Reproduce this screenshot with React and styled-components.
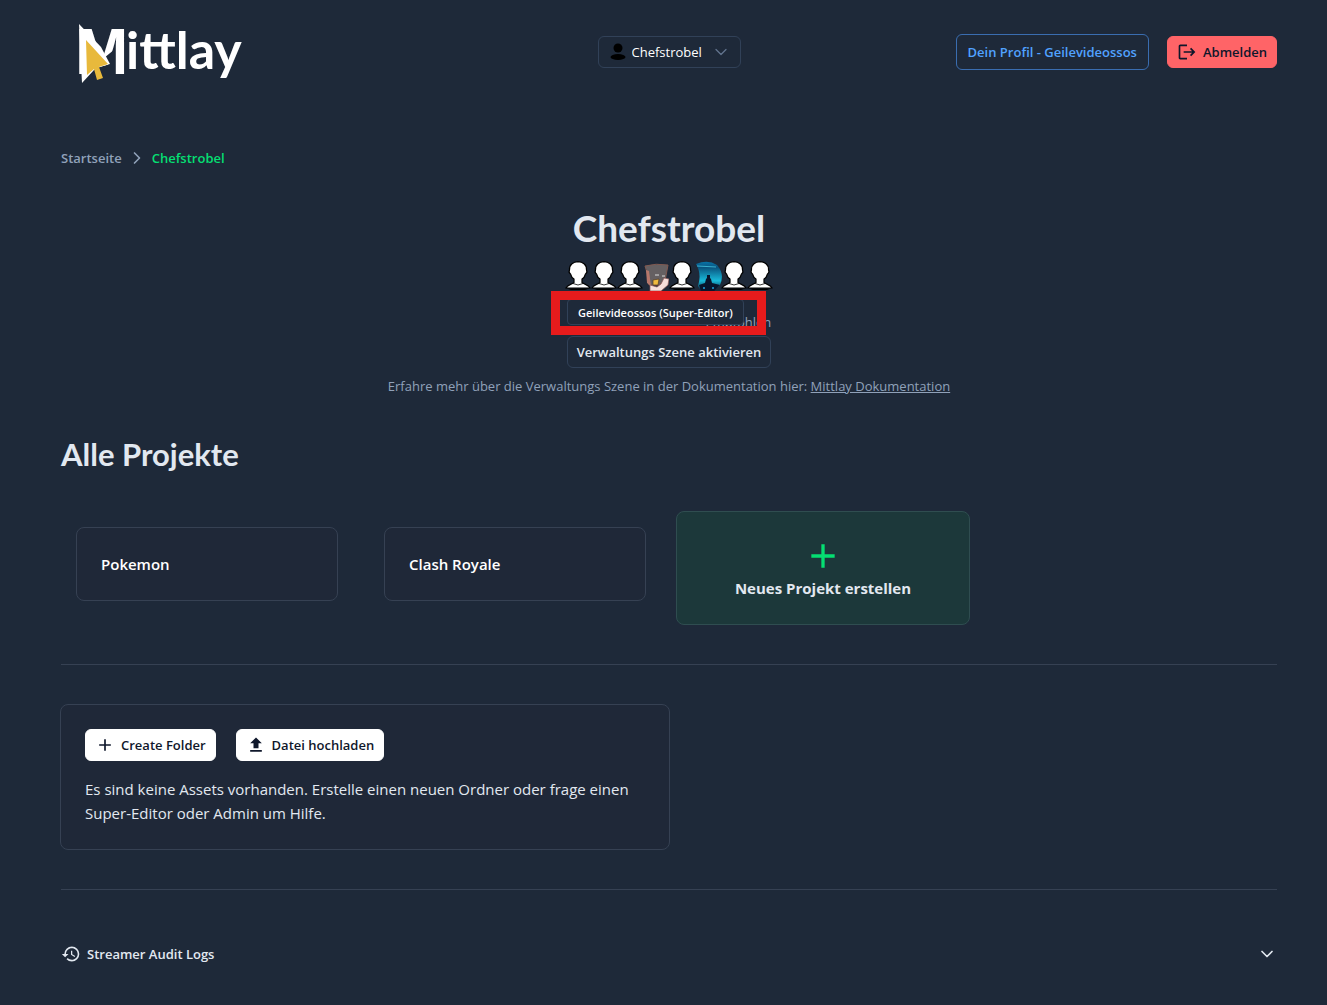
import React from 'react';
import styled, { createGlobalStyle, css } from 'styled-components';
import { MdAdd, MdHistory, MdLogout, MdUpload } from 'react-icons/md';
import { ChevronDown, ChevronRight } from 'lucide-react';

const Colors = {
  page: '#1e2939',
  card: '#1f2838',
  line: '#314158',
  cardLine: '#364153',
  text: '#e2e8f0',
  muted: '#90a1b9',
  green: '#05df72',
  blue: '#51a2ff',
  red: '#ff6467',
  dark: '#0f172b',
};

const GlobalStyle = createGlobalStyle`
  * {
    box-sizing: border-box;
  }
  body {
    margin: 0;
    background: ${Colors.page};
    color: ${Colors.text};
    font-family: 'Open Sans', 'Noto Sans', sans-serif;
    font-size: 15px;
    line-height: 24px;
  }
  button, select {
    font-family: inherit;
    cursor: pointer;
  }
  svg {
    display: block;
    flex-shrink: 0;
  }
`;

const Page = styled.div`
  padding: 0 50px 40px 61px;
`;

const Header = styled.header`
  display: grid;
  grid-template-columns: 1fr auto 1fr;
  align-items: center;
  height: 104px;
`;

const LogoLink = styled.a`
  justify-self: start;
  padding: 4px 0 0 8px;
`;

const Actions = styled.div`
  display: flex;
  align-items: center;
  justify-content: flex-end;
  gap: 18px;
`;

const Picker = styled.label`
  display: flex;
  align-items: center;
  height: 32px;
  padding: 0 9px 0 11px;
  border: 1px solid ${Colors.line};
  border-radius: 6px;
  svg:last-child {
    color: #62748e;
    pointer-events: none;
  }
`;

const PickerSelect = styled.select`
  appearance: none;
  border: 0;
  padding: 0 28px 0 6px;
  margin-right: -20px;
  background: transparent;
  color: #fff;
  font-size: 13px;
  line-height: 20px;
  outline: none;
`;

const Button = styled.button`
  display: inline-flex;
  align-items: center;
  justify-content: center;
  gap: 6px;
  height: 32px;
  padding: 0 9px;
  border: 1px solid ${Colors.line};
  border-radius: 6px;
  background: transparent;
  color: ${Colors.text};
  font-size: 13px;
  font-weight: 600;
  line-height: 20px;
  white-space: nowrap;
  ${props =>
    props.$kind === 'profile' &&
    css`
      height: 36px;
      padding: 0 11px;
      border-color: #3a6db0;
      color: ${Colors.blue};
      text-decoration: none;
    `}
  ${props =>
    props.$kind === 'danger' &&
    css`
      border-color: ${Colors.red};
      background: ${Colors.red};
      color: ${Colors.dark};
    `}
  ${props =>
    props.$kind === 'light' &&
    css`
      border-color: #fff;
      background: #fff;
      color: ${Colors.dark};
    `}
`;

const Breadcrumb = styled.nav`
  display: flex;
  align-items: center;
  gap: 5px;
  margin-top: 44px;
  color: ${Colors.muted};
  font-size: 13px;
  font-weight: 600;
  line-height: 20px;
`;

const Crumb = styled.a`
  color: ${props => (props.$current ? Colors.green : Colors.muted)};
  text-decoration: none;
`;

const Hero = styled.section`
  display: flex;
  flex-direction: column;
  align-items: center;
  margin-top: 38px;
`;

const Title = styled.h1`
  margin: 0;
  font-family: Lato, sans-serif;
  font-size: 37px;
  font-weight: 700;
  line-height: 44px;
`;

const Team = styled.div`
  position: relative;
  display: flex;
  height: 30px;
  margin-top: 11px;
`;

const Member = styled.span`
  display: flex;
  justify-content: center;
  width: 26px;
`;

const Tooltip = styled.span`
  position: absolute;
  top: 38px;
  left: 2px;
  height: 26px;
  padding: 0 10px;
  border: 1px solid ${Colors.line};
  border-radius: 4px;
  background: ${Colors.page};
  color: #fff;
  font-size: 11px;
  font-weight: 600;
  line-height: 26px;
  white-space: nowrap;
`;

const Highlight = styled.span`
  position: absolute;
  top: 30px;
  left: -14px;
  width: 215px;
  height: 44px;
  border: 9px solid #e71b1c;
`;

const Activate = styled.div`
  display: flex;
  flex-direction: column;
  align-items: flex-end;
  gap: 4px;
  margin-top: 21px;
`;

const Hint = styled.span`
  color: ${Colors.muted};
  font-size: 13px;
  line-height: 20px;
`;

const DocLine = styled.p`
  margin: 8px 0 0;
  color: ${Colors.muted};
  font-size: 13px;
  line-height: 20px;
  a {
    color: inherit;
  }
`;

const SectionTitle = styled.h2`
  margin: 40px 0 0;
  font-family: Lato, sans-serif;
  font-size: 31px;
  font-weight: 700;
  line-height: 36px;
`;

const Projects = styled.div`
  display: grid;
  grid-template-columns: repeat(4, 1fr);
  align-items: start;
  gap: 16px;
  margin-top: 39px;
`;

const Project = styled.a`
  margin: 16px 15px;
  padding: 24px;
  border: 1px solid ${Colors.cardLine};
  border-radius: 8px;
  background: ${Colors.card};
  color: #fff;
  font-weight: 600;
  text-decoration: none;
`;

const NewProject = styled.button`
  display: flex;
  flex-direction: column;
  align-items: center;
  margin: 0 -1px;
  padding: 24px;
  border: 1px solid #2f4d50;
  border-radius: 8px;
  background: #1c383a;
  color: ${Colors.text};
  font-size: 15px;
  font-weight: 700;
  line-height: 24px;
  svg {
    color: ${Colors.green};
  }
`;

const Divider = styled.hr`
  height: 1px;
  margin: 39px 0;
  border: 0;
  background: ${Colors.cardLine};
`;

const Assets = styled.section`
  width: calc(50% + 2px);
  margin-left: -1px;
  padding: 24px;
  border: 1px solid ${Colors.cardLine};
  border-radius: 8px;
  background: ${Colors.card};
  p {
    margin: 16px 0 0;
  }
`;

const Toolbar = styled.div`
  display: flex;
  gap: 20px;
`;

const LogsToggle = styled.button`
  display: flex;
  align-items: center;
  gap: 6px;
  width: 100%;
  margin-top: 52px;
  padding: 0;
  border: 0;
  background: transparent;
  color: ${Colors.text};
  font-size: 13px;
  font-weight: 600;
  line-height: 24px;
  svg:last-child {
    margin-left: auto;
  }
`;

const LogoText = styled.text`
  fill: #fff;
  font-family: ${props => (props.$initial ? "'Liberation Sans', Arial" : 'Lato')}, sans-serif;
  font-size: ${props => (props.$initial ? 64 : 52)}px;
  font-weight: 700;
`;

const Logo = () => (
  <svg width="180" height="84" viewBox="-8 -8 180 84" role="img" aria-label="Mittlay">
    <LogoText $initial x="-2" y="54">M</LogoText>
    <LogoText x="49" y="49">ittlay</LogoText>
    <path d="M38 29V56H12V50L33 44L27 38Z" fill={Colors.page} />
    <path d="M2 4L24 27L33 44L23 47L17 50L5 63Z" fill="#fff" />
    <path d="M9 20L31 44L22 47L26 58L20 60L17 49L10 55Z" fill="#e8b93c" />
  </svg>
);

const UserMark = () => (
  <svg width="16" height="18" viewBox="0 0 16 18" aria-hidden="true">
    <circle cx="8" cy="5" r="4.5" />
    <ellipse cx="8" cy="14" rx="7.5" ry="3" />
  </svg>
);

const Silhouette = () => (
  <svg width="26" height="30" viewBox="0 0 26 30" aria-hidden="true">
    <path
      d="M1 27C2 24 6 24 9 21.500L9 18C7 17 6 15 5.500 13C4 12 4 10 4.500 9C4 4 8 .8 13 .7C18 .8 22 4 21.500 9C22 10 22 12 20.500 13C20 15 19 17 17 18L17 21.500C20 24 24 24 25 27Z"
      fill="#fff"
      stroke="#000"
      strokeWidth="1.2"
    />
    <path d="M8 22.500Q13 25.500 18 22.500" fill="none" stroke="#000" strokeWidth=".8" />
    <path d="M2 27.500H24L20 29H6Z" />
  </svg>
);

const ComicAvatar = () => (
  <svg width="26" height="30" viewBox="0 0 26 30" aria-hidden="true">
    <path d="M2 5Q13 2 25 4L22 20L16 24L6 24Q5 12 2 5Z" fill="#656062" stroke="#815950" />
    <path d="M3 9L6 10L8 25L4 22Z" fill="#b6776b" />
    <path d="M12 14H16M19 15H22" stroke="#ddd" />
    <path d="M7 24L14 26L18 23L21 17L26 18L25 24L18 30H7Z" fill="#f5dedb" stroke="#855" strokeWidth=".7" />
    <path d="M10 19L16 18L15 24L10 24Z" fill="#efba3f" stroke="#553b25" strokeWidth=".7" />
  </svg>
);

const NightAvatar = () => (
  <svg width="28" height="30" viewBox="0 0 28 30" aria-hidden="true">
    <defs>
      <linearGradient id="night" x2="0" y2="1">
        <stop stopColor="#0874a8" />
        <stop offset=".2" stopColor="#09547f" />
        <stop offset=".65" stopColor="#19b9d9" />
        <stop offset="1" stopColor="#071b38" />
      </linearGradient>
    </defs>
    <path d="M2 3Q14-2 23 4Q31 13 26 24L20 30H7L4 25Q8 13 2 3Z" fill="url(#night)" />
    <path d="M3 5L22 6" stroke="#4fd4ed" strokeWidth=".7" />
    <path d="M5 24L11 22L12 18L13 17V14H16V17L17 18L18 22L26 24L20 30H7Z" fill="#08152c" />
    <path d="M9 27H11M18 27H20" stroke="#197daf" strokeWidth="2" />
  </svg>
);

const team = [Silhouette, Silhouette, Silhouette, ComicAvatar, Silhouette, NightAvatar, Silhouette, Silhouette];
const projects = ['Pokemon', 'Clash Royale'];

const App = () => (
  <>
    <GlobalStyle />
    <Page>
      <Header>
        <LogoLink href="/">
          <Logo />
        </LogoLink>
        <Picker>
          <UserMark />
          <PickerSelect aria-label="Streamer">
            <option>Chefstrobel</option>
          </PickerSelect>
          <ChevronDown size={20} strokeWidth={1.5} />
        </Picker>
        <Actions>
          <Button as="a" href="/profil" $kind="profile">
            Dein Profil - Geilevideossos
          </Button>
          <Button $kind="danger">
            <MdLogout size={20} />
            Abmelden
          </Button>
        </Actions>
      </Header>

      <Breadcrumb aria-label="Breadcrumb">
        <Crumb href="/">Startseite</Crumb>
        <ChevronRight size={20} strokeWidth={2} />
        <Crumb href="/chefstrobel" $current>
          Chefstrobel
        </Crumb>
      </Breadcrumb>

      <Hero>
        <Title>Chefstrobel</Title>
        <Team>
          {team.map((Avatar, i) => (
            <Member key={i}>
              <Avatar />
            </Member>
          ))}
          <Tooltip role="tooltip">Geilevideossos (Super-Editor)</Tooltip>
          <Highlight />
        </Team>
        <Activate>
          <Hint>Empfohlen</Hint>
          <Button>Verwaltungs Szene aktivieren</Button>
        </Activate>
        <DocLine>
          Erfahre mehr über die Verwaltungs Szene in der Dokumentation hier: <a href="/docs">Mittlay Dokumentation</a>
        </DocLine>
      </Hero>

      <SectionTitle>Alle Projekte</SectionTitle>
      <Projects>
        {projects.map(name => (
          <Project key={name} href="/projekt">
            {name}
          </Project>
        ))}
        <NewProject>
          <MdAdd size={40} />
          Neues Projekt erstellen
        </NewProject>
      </Projects>

      <Divider />
      <Assets>
        <Toolbar>
          <Button $kind="light">
            <MdAdd size={20} />
            Create Folder
          </Button>
          <Button $kind="light">
            <MdUpload size={20} />
            Datei hochladen
          </Button>
        </Toolbar>
        <p>
          Es sind keine Assets vorhanden. Erstelle einen neuen Ordner oder frage einen Super-Editor oder Admin um Hilfe.
        </p>
      </Assets>
      <Divider />

      <LogsToggle aria-expanded="false">
        <MdHistory size={20} />
        Streamer Audit Logs
        <ChevronDown size={20} />
      </LogsToggle>
    </Page>
  </>
);

export default App;
